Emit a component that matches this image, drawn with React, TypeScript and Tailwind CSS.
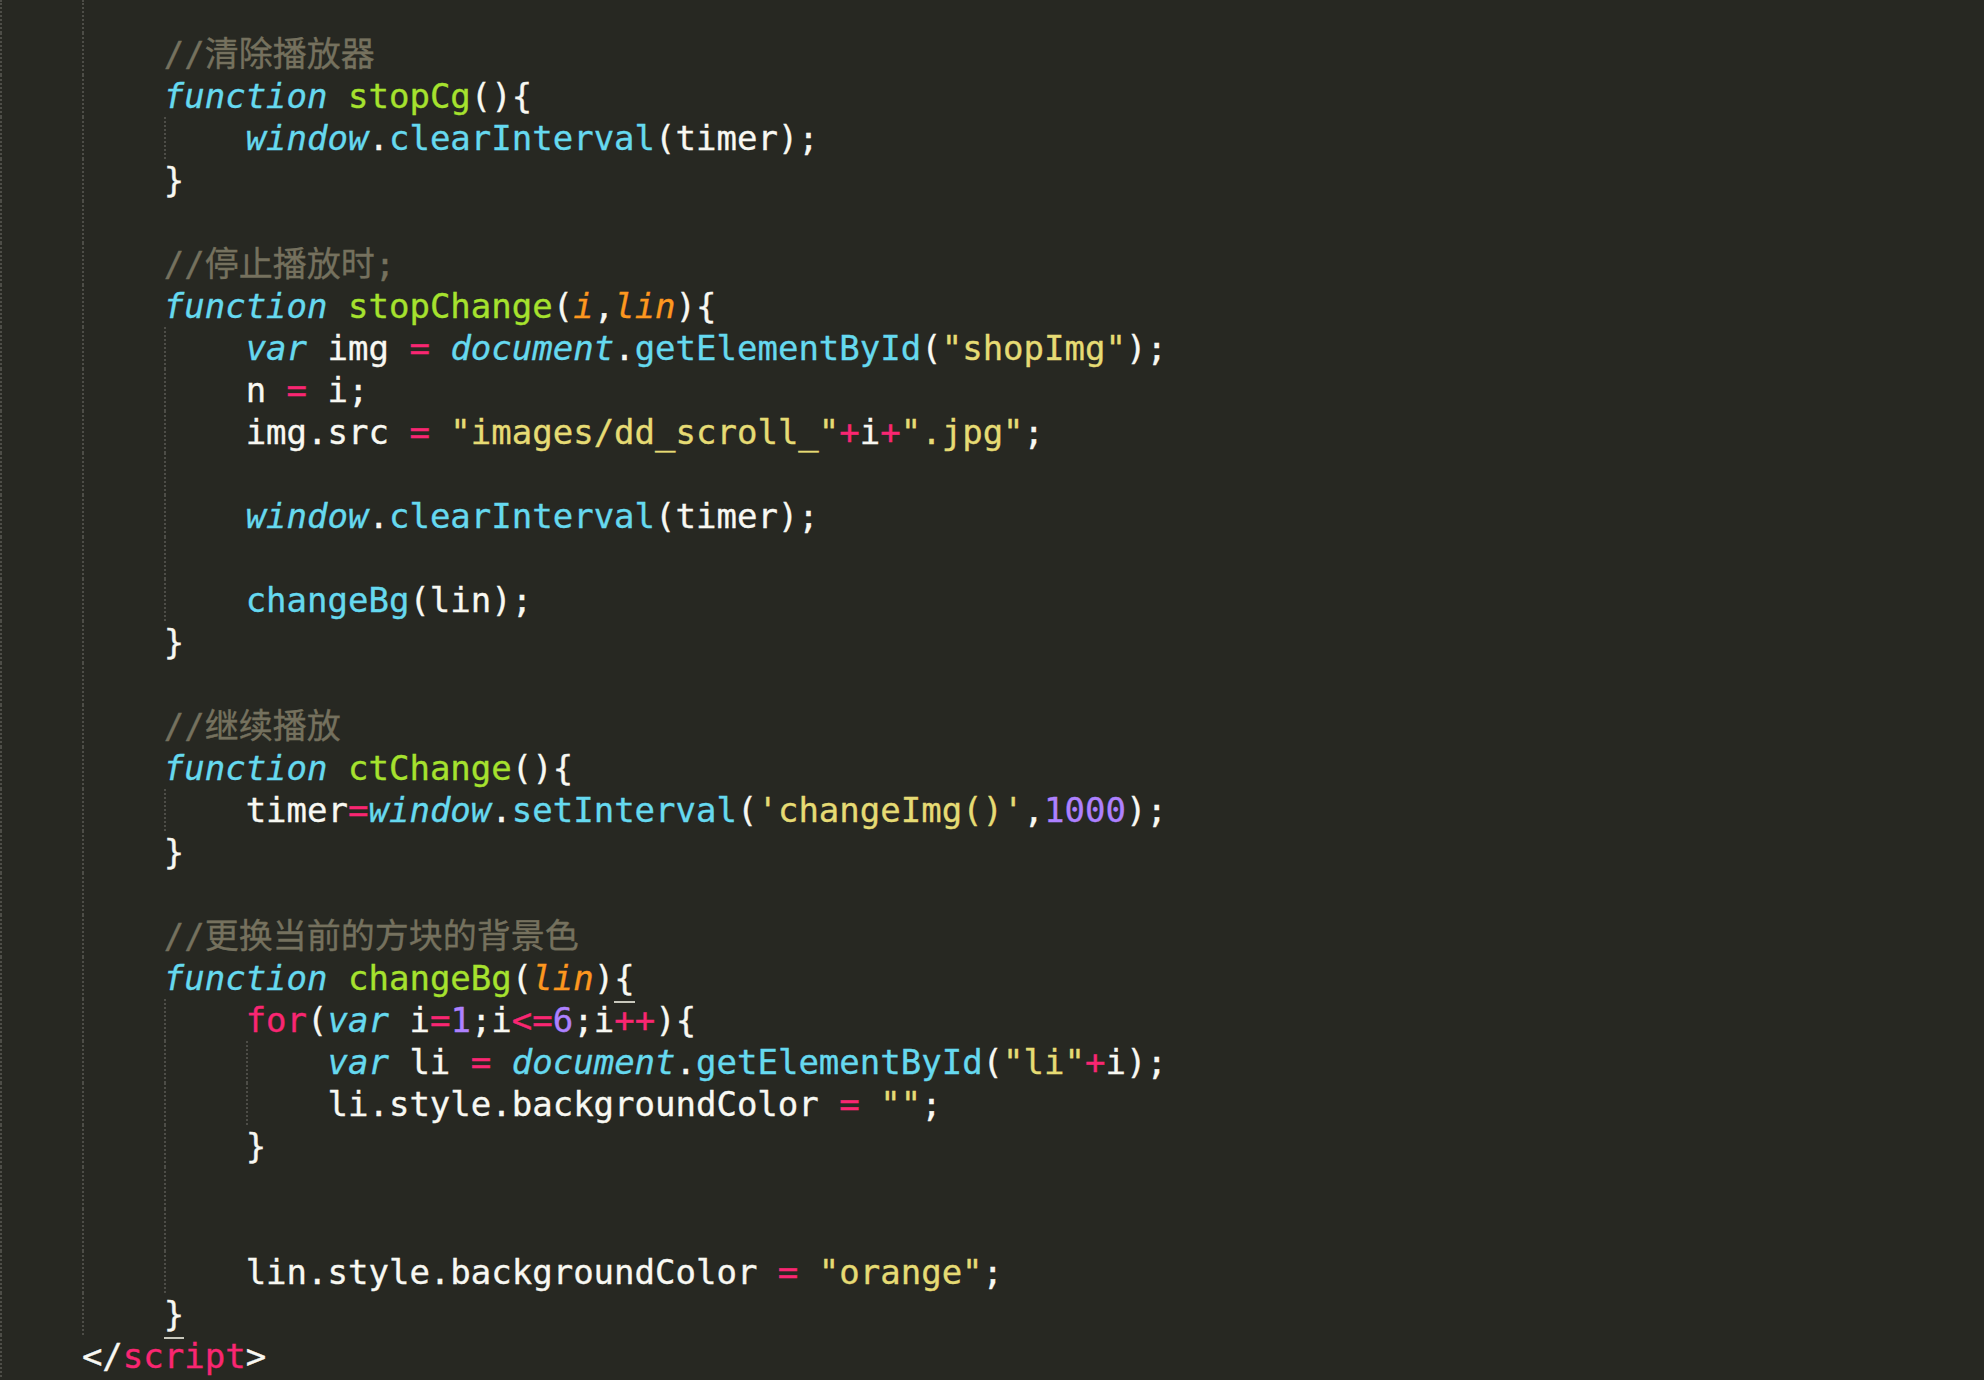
import React from "react";

type Tok = [string, string];
type Line = { ind: number; g: number; toks: Tok[] };

const W = "text-[#f8f8f2]";
const CMT = "text-[#75715e]";
const KW = "text-[#66d9ef] italic";
const FN = "text-[#a6e22e]";
const PARAM = "text-[#fd971f] italic";
const SUP = "text-[#66d9ef]";
const STR = "text-[#e6db74]";
const OP = "text-[#f92672]";
const NUM = "text-[#ae81ff]";
const MATCH = "match";

const blank = (g: number): Line => ({ ind: g, g, toks: [] });

const lines: Line[] = [
  { ind: 2, g: 2, toks: [["//清除播放器", CMT]] },
  { ind: 2, g: 2, toks: [["function", KW], [" ", W], ["stopCg", FN], ["(){", W]] },
  { ind: 3, g: 3, toks: [["window", KW], [".", W], ["clearInterval", SUP], ["(timer);", W]] },
  { ind: 2, g: 2, toks: [["}", W]] },
  blank(2),
  { ind: 2, g: 2, toks: [["//停止播放时;", CMT]] },
  {
    ind: 2,
    g: 2,
    toks: [["function", KW], [" ", W], ["stopChange", FN], ["(", W], ["i", PARAM], [",", W], ["lin", PARAM], ["){", W]],
  },
  {
    ind: 3,
    g: 3,
    toks: [
      ["var", KW],
      [" img ", W],
      ["=", OP],
      [" ", W],
      ["document", KW],
      [".", W],
      ["getElementById", SUP],
      ["(", W],
      ['"shopImg"', STR],
      [");", W],
    ],
  },
  { ind: 3, g: 3, toks: [["n ", W], ["=", OP], [" i;", W]] },
  {
    ind: 3,
    g: 3,
    toks: [
      ["img.src ", W],
      ["=", OP],
      [" ", W],
      ['"images/dd_scroll_"', STR],
      ["+", OP],
      ["i", W],
      ["+", OP],
      ['".jpg"', STR],
      [";", W],
    ],
  },
  blank(3),
  { ind: 3, g: 3, toks: [["window", KW], [".", W], ["clearInterval", SUP], ["(timer);", W]] },
  blank(3),
  { ind: 3, g: 3, toks: [["changeBg", SUP], ["(lin);", W]] },
  { ind: 2, g: 2, toks: [["}", W]] },
  blank(2),
  { ind: 2, g: 2, toks: [["//继续播放", CMT]] },
  { ind: 2, g: 2, toks: [["function", KW], [" ", W], ["ctChange", FN], ["(){", W]] },
  {
    ind: 3,
    g: 3,
    toks: [
      ["timer", W],
      ["=", OP],
      ["window", KW],
      [".", W],
      ["setInterval", SUP],
      ["(", W],
      ["'changeImg()'", STR],
      [",", W],
      ["1000", NUM],
      [");", W],
    ],
  },
  { ind: 2, g: 2, toks: [["}", W]] },
  blank(2),
  { ind: 2, g: 2, toks: [["//更换当前的方块的背景色", CMT]] },
  {
    ind: 2,
    g: 2,
    toks: [["function", KW], [" ", W], ["changeBg", FN], ["(", W], ["lin", PARAM], [")", W], ["{", MATCH]],
  },
  {
    ind: 3,
    g: 3,
    toks: [
      ["for", OP],
      ["(", W],
      ["var", KW],
      [" i", W],
      ["=", OP],
      ["1", NUM],
      [";i", W],
      ["<=", OP],
      ["6", NUM],
      [";i", W],
      ["++", OP],
      ["){", W],
    ],
  },
  {
    ind: 4,
    g: 4,
    toks: [
      ["var", KW],
      [" li ", W],
      ["=", OP],
      [" ", W],
      ["document", KW],
      [".", W],
      ["getElementById", SUP],
      ["(", W],
      ['"li"', STR],
      ["+", OP],
      ["i);", W],
    ],
  },
  { ind: 4, g: 4, toks: [["li.style.backgroundColor ", W], ["=", OP], [" ", W], ['""', STR], [";", W]] },
  { ind: 3, g: 3, toks: [["}", W]] },
  blank(3),
  blank(3),
  {
    ind: 3,
    g: 3,
    toks: [["lin.style.backgroundColor ", W], ["=", OP], [" ", W], ['"orange"', STR], [";", W]],
  },
  { ind: 2, g: 2, toks: [["}", MATCH]] },
  { ind: 1, g: 1, toks: [["</", W], ["script", OP], [">", W]] },
];

function Guides({ ind, g }: { ind: number; g: number }) {
  return (
    <>
      {Array.from({ length: Math.max(ind, g) }).map((_, i) => (
        <span
          key={i}
          className={
            i < g
              ? "w-[4ch] shrink-0 border-l-2 border-dotted border-[#4d4d47]"
              : "w-[4ch] shrink-0"
          }
        />
      ))}
    </>
  );
}

// bracket under the caret gets a thin underline, as the editor draws it
function Tk({ t, c }: { t: string; c: string }) {
  if (c === MATCH) {
    return (
      <span className="relative text-[#f8f8f2]">
        {t}
        <span className="absolute left-0 right-0 top-[43px] h-[2px] bg-[#c8c8bc]" />
      </span>
    );
  }
  return <span className={c}>{t}</span>;
}

function Row({ line }: { line: Line }) {
  return (
    <div className="flex h-[42px] whitespace-pre">
      <Guides ind={line.ind} g={line.g} />
      <span>
        {line.toks.map(([t, c], i) => (
          <Tk key={i} t={t} c={c} />
        ))}
      </span>
    </div>
  );
}

export default function App() {
  return (
    <div className="h-[1380px] w-full overflow-hidden bg-[#272822] font-['DejaVu_Sans_Mono','Noto_Sans_CJK_SC',monospace] text-[34px] leading-[42px] text-[#f8f8f2] [-webkit-text-stroke:0.35px_currentColor]">
      <div className="flex h-[33px]">
        <Guides ind={2} g={2} />
      </div>
      {lines.map((l, i) => (
        <Row key={i} line={l} />
      ))}
    </div>
  );
}
